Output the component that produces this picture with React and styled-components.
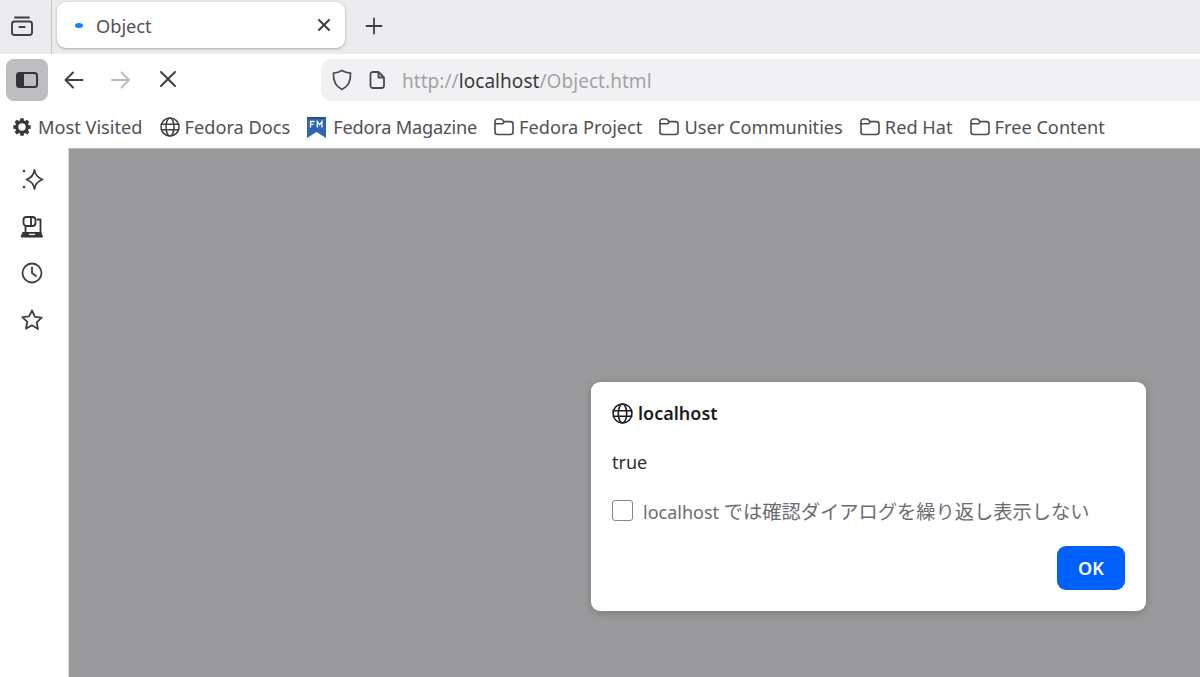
import React from "react";
import styled, { createGlobalStyle } from "styled-components";

const Global = createGlobalStyle`
  html, body { margin: 0; padding: 0; background: #fff; }
  body { font-family: "Noto Sans", "Noto Sans CJK JP", sans-serif; color: #4a4a4f; overflow: hidden; }
`;
const Page = styled.div`
  width: 1200px; height: 677px; display: flex; flex-direction: column; overflow: hidden;
`;
const TabStrip = styled.div`
  height: 54px; flex: none; background: #ebebed; display: flex; align-items: flex-start;
`;
const TabStripLeft = styled.div`
  width: 52px; height: 54px; flex: none; border-right: 1px solid #c6c6c8; box-sizing: border-box;
  display: flex; align-items: center; justify-content: center; padding-right: 8px; padding-bottom: 2px;
`;
const Tab = styled.div`
  margin: 2px 0 0 5px; width: 288px; height: 46px; box-sizing: border-box; background: #fff; border-radius: 9px;
  box-shadow: 0 1px 3px rgba(0,0,0,.28); display: flex; align-items: center; padding: 0 14px 0 18px;
`;
const TabDot = styled.span`
  width: 8px; height: 5px; border-radius: 50%; background: #0a84ff; flex: none; margin-right: 13px;
`;
const TabTitle = styled.span`
  font-size: 18.2px; color: #505055; flex: 1; padding-top: 1px;
`;
const NewTab = styled.div`
  margin: 15px 0 0 18px; display: flex;
`;
const NavBar = styled.div`
  height: 50px; box-sizing: border-box; padding: 2px 0 0 6px; flex: none; background: #fff; display: flex; align-items: center;
`;
const SidebarToggle = styled.div`
  width: 42px; height: 42px; border-radius: 8px; background: #bdbdbf; display: flex; align-items: center; justify-content: center;
`;
const NavButton = styled.div`
  width: 47px; display: flex; justify-content: center; color: ${p => p.$dim ? "#bbbbbd" : "#3f3f44"};
`;
const NavButtons = styled.div`
  display: flex; margin-left: 2px;
`;
const UrlBar = styled.div`
  margin-left: 130px; flex: 1; height: 42px; background: #f1f1f3; border-radius: 10px 0 0 10px;
  display: flex; align-items: center; padding-left: 10px; gap: 15px;
`;
const UrlText = styled.div`
  font-size: 19px; color: #a3a3a6; margin-left: 1px; padding-top: 2px; white-space: nowrap; letter-spacing: .05px;
`;
const UrlHost = styled.span`
  color: #3a3a3f;
`;
const Bookmarks = styled.div`
  height: 44px; flex: none; background: #fff; display: flex; align-items: center; padding: 2px 0 0 13px; gap: 17px; box-sizing: border-box;
`;
const Bookmark = styled.div`
  display: flex; align-items: center; gap: ${p => p.$gap || 5}px; font-size: 18.2px; color: #505055; white-space: nowrap;
  letter-spacing: ${p => p.$tight ? "-.2px" : "0"};
`;
const Main = styled.div`
  flex: 1; display: flex; min-height: 0;
`;
const Sidebar = styled.div`
  width: 68px; flex: none; background: #fff; display: flex; flex-direction: column; align-items: center;
  padding: 19px 5px 0 0; box-sizing: border-box; gap: 23px; color: #3f3f44;
`;
const Content = styled.div`
  flex: 1; position: relative; background: #9a9a9c; border-top: 1px solid #b8b8ba; border-left: 1px solid #d8d8d8;
`;
const Dialog = styled.div`
  position: absolute; left: 522px; top: 233px; width: 555px; height: 229px; background: #fff; border-radius: 9px;
  box-sizing: border-box; padding: 20px 21px 21px; display: flex; flex-direction: column;
  box-shadow: 0 2px 8px rgba(0,0,0,.22);
`;
const Origin = styled.div`
  display: flex; align-items: center; gap: 5px; font-size: 18px; font-weight: 600; color: #1c1c20; height: 22px;
`;
const Message = styled.div`
  margin-top: 26px; font-size: 18px; color: #2e2e33; line-height: 24px;
`;
const CheckRow = styled.div`
  margin-top: 26px; display: flex; align-items: center; gap: 10px; font-size: 18px; color: #6c6c70; line-height: 24px; white-space: nowrap;
`;
const CheckLabel = styled.span`
  display: block;
`;
const Cjk = styled.span`
  font-size: 19.25px;
`;
const CheckBox = styled.div`
  width: 19px; height: 19px; border: 1px solid #85858c; border-radius: 3px; background: #fff; margin-top: -3px;
`;
const Actions = styled.div`
  margin-top: auto; display: flex; justify-content: flex-end;
`;
const OkButton = styled.div`
  width: 68px; height: 44px; border-radius: 9px; background: #0060fa; color: #fff; font-size: 18px; font-weight: 600;
  display: flex; align-items: center; justify-content: center;
`;

const Ico = ({ size = 24, children, vb = 24, sw = 2, color = "currentColor" }) => (
  <svg width={size} height={size} viewBox={`0 0 ${vb} ${vb}`} fill="none" stroke={color} strokeWidth={sw} strokeLinecap="round" strokeLinejoin="round" style={{ flex: "none" }}>{children}</svg>
);
const Globe = ({ size = 20, color = "#3f3f44" }) => (
  <Ico size={size} vb={20} sw={1.5} color={color}>
    <circle cx="10" cy="10" r="9" />
    <ellipse cx="10" cy="10" rx="4" ry="9" />
    <path d="M1.2 7.3h17.6M1.2 12.7h17.6" />
  </Ico>
);
const Folder = () => (
  <Ico size={20} vb={20} sw={1.6} color="#4a4a4f">
    <path d="M1 4.5A2.5 2.5 0 0 1 3.5 2h3.2c.7 0 1.3.3 1.7.8l1.1 1.3c.3.3.6.5 1 .5h6A2.5 2.5 0 0 1 19 7.1v7.9a2.5 2.5 0 0 1-2.5 2.5h-13A2.5 2.5 0 0 1 1 15z" />
    <path d="M1 6.8h6.8c.8 0 1.2-.4 1.6-.9l.8-1.3" />
  </Ico>
);
const Gear = () => (
  <svg width="18" height="18" viewBox="0 0 18 18" style={{ flex: "none" }}>
    <path fill="#38383d" fillRule="evenodd" d="M7.4.3h3.2l.4 2.3 1.2.5 1.900-1.300 2.200 2.200-1.300 1.900.5 1.200 2.200.4v3.200l-2.200.4-.5 1.200 1.300 1.900-2.200 2.200-1.900-1.300-1.200.5-.4 2.200H7.400L7 15.600l-1.200-.5-1.900 1.300-2.200-2.200L3 12.300l-.5-1.200L.3 10.700V7.500l2.200-.4.500-1.200-1.300-1.900 2.200-2.200 1.900 1.300L7 2.600zM9 5.300a3.700 3.700 0 1 0 0 7.400 3.700 3.700 0 0 0 0-7.400z" />
  </svg>
);
const FedoraMag = () => (
  <svg width="19" height="21" viewBox="0 0 19 21" style={{ flex: "none" }}>
    <path d="M0 0h19v21l-9.500-6L0 21z" fill="#2f66b2" />
    <path d="M0 0h19v2H0z" fill="#25528f" />
    <path d="M3.500 10.500V4.500h4M3.500 7.300h3M10.300 10.500V4.500l2.300 3.300 2.300-3.300v6" stroke="#fff" strokeWidth="1.300" fill="none" />
  </svg>
);

export default function App() {
  return (
    <Page>
      <Global />
      <TabStrip>
        <TabStripLeft>
          <Ico size={24} sw={1.9} color="#3f3f44">
            <rect x="2" y="7.500" width="20" height="13.500" rx="2.500" />
            <path d="M5 3.500h14" />
            <path d="M9.500 13h5" strokeWidth="2.200" />
          </Ico>
        </TabStripLeft>
        <Tab>
          <TabDot />
          <TabTitle>Object</TabTitle>
          <Ico size={14} vb={14} sw={2.1} color="#3f3f44"><path d="M2 2l10 10M12 2L2 12" /></Ico>
        </Tab>
        <NewTab>
          <Ico size={22} vb={22} sw={1.8} color="#3f3f44"><path d="M11 3.500v15M3.500 11h15" /></Ico>
        </NewTab>
      </TabStrip>
      <NavBar>
        <SidebarToggle>
          <svg width="22" height="16" viewBox="0 0 22 16">
            <rect x="1" y="1" width="20" height="14" rx="2.500" fill="none" stroke="#333338" strokeWidth="2" />
            <path d="M3 1h5v14H3a2 2 0 0 1-2-2V3a2 2 0 0 1 2-2z" fill="#333338" />
          </svg>
        </SidebarToggle>
        <NavButtons>
          <NavButton><Ico size={22} vb={22} sw={2}><path d="M19.500 11H2.500M10 3.500L2.500 11l7.500 7.500" /></Ico></NavButton>
          <NavButton $dim><Ico size={22} vb={22} sw={1.8}><path d="M2 11h17M11.500 3.500L19 11l-7.500 7.500" /></Ico></NavButton>
          <NavButton><Ico size={20} vb={20} sw={2}><path d="M3 3l14 14M17 3L3 17" /></Ico></NavButton>
        </NavButtons>
        <UrlBar>
          <Ico size={22} vb={22} sw={1.7} color="#4a4a4f"><path d="M11 1.500c2.500 1.600 5 2.300 8.500 2.600.5 8-2 13.200-8.500 16.400C4.500 17.300 2 12.100 2.500 4.100 6 3.800 8.500 3.100 11 1.500z" /></Ico>
          <Ico size={18} vb={18} sw={1.8} color="#4a4a4f"><path d="M2.500 3.500A2.500 2.500 0 0 1 5 1h5.500L16 6.500v8a2.500 2.500 0 0 1-2.500 2.500H5a2.500 2.500 0 0 1-2.500-2.500zM10.500 1v5.500H16" /></Ico>
          <UrlText>http://<UrlHost>localhost</UrlHost>/Object.html</UrlText>
        </UrlBar>
      </NavBar>
      <Bookmarks>
        <Bookmark $gap={7}><Gear />Most Visited</Bookmark>
        <Bookmark><Globe />Fedora Docs</Bookmark>
        <Bookmark $gap={7} $tight><FedoraMag />Fedora Magazine</Bookmark>
        <Bookmark><Folder />Fedora Project</Bookmark>
        <Bookmark><Folder />User Communities</Bookmark>
        <Bookmark><Folder />Red Hat</Bookmark>
        <Bookmark><Folder />Free Content</Bookmark>
      </Bookmarks>
      <Main>
        <Sidebar>
          <Ico size={24} vb={24} sw={1.8} color="#3f3f44">
            <path d="M14.500 3c.7 5 3 7.700 8 9.500-5 1.800-7.300 4.500-8 9.500-.8-5-3-7.700-8-9.500 5-1.800 7.200-4.500 8-9.500z" />
            <circle cx="4" cy="4" r="1.300" fill="#3f3f44" stroke="none" />
            <circle cx="4" cy="20" r="1.300" fill="#3f3f44" stroke="none" />
          </Ico>
          <Ico size={24} vb={24} sw={1.8} color="#333338">
            <rect x="3.500" y="3" width="12" height="9" rx="3" />
            <path d="M11 3v9M5.500 12v6.500M17.500 5.500h3v13" />
            <path d="M3 18.500h18l1.500 4.500h-21z" fill="#333338" strokeWidth="1" />
            <path d="M9.500 20.300h5" stroke="#fff" strokeWidth="1.300" />
          </Ico>
          <Ico size={24} vb={24} sw={1.8} color="#3f3f44"><circle cx="12" cy="12" r="9.500" /><path d="M12 6.500V12l4 3" /></Ico>
          <Ico size={24} vb={24} sw={1.8} color="#3f3f44"><path d="M12 2.500l2.900 6.300 6.800.8-5 4.700 1.300 6.800L12 17.300 5.900 20.600l1.400-6.800-5-4.700 6.800-.8z" /></Ico>
        </Sidebar>
        <Content>
          <Dialog>
            <Origin><Globe size={21} color="#1c1c20" />localhost</Origin>
            <Message>true</Message>
            <CheckRow><CheckBox /><CheckLabel>localhost <Cjk>では確認ダイアログを繰り返し表示しない</Cjk></CheckLabel></CheckRow>
            <Actions><OkButton>OK</OkButton></Actions>
          </Dialog>
        </Content>
      </Main>
    </Page>
  );
}
